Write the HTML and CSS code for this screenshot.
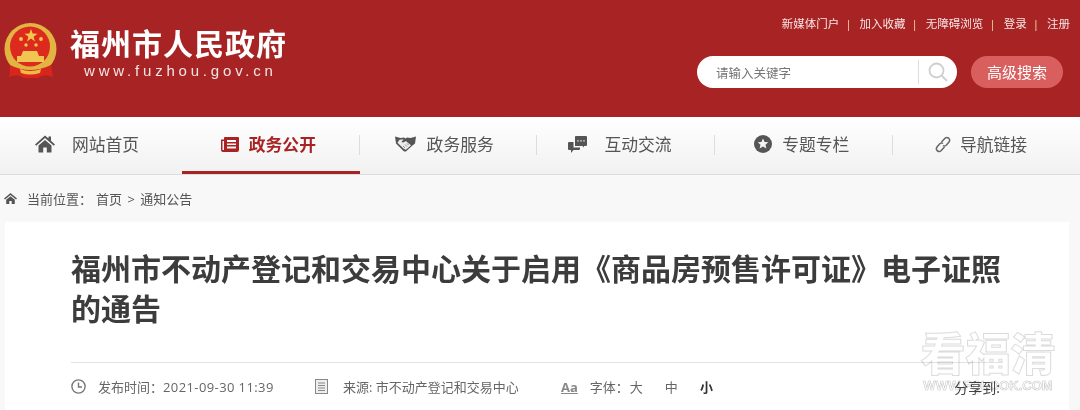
FILE: index.html
```html
<!DOCTYPE html>
<html lang="zh-CN">
<head>
    <meta charset="UTF-8">
    <title>福州市人民政府</title>
    <link rel="stylesheet" href="styles.css">
</head>
<body>
    <header class="header">
        <div class="logo">
            <svg class="crest" width="54" height="56" viewBox="0 0 54 56">
                <path d="M8 40 L5 54 Q14 50 20 55 H34 Q40 50 49 54 L46 40 Z" fill="#d8261c"/>
                <circle cx="26.500" cy="26" r="26" fill="#e2b543"/>
                <circle cx="26" cy="23.500" r="20" fill="#dc2a1e"/>
                <polygon points="27,6 28.600,10.600 33.500,10.700 29.600,13.700 31,18.400 27,15.600 23,18.400 24.400,13.700 20.500,10.700 25.400,10.600" fill="#f3c84a"/>
                <circle cx="17" cy="16" r="1.900" fill="#f3c84a"/>
                <circle cx="37" cy="16" r="1.900" fill="#f3c84a"/>
                <circle cx="22" cy="22" r="1.700" fill="#f3c84a"/>
                <circle cx="32" cy="22" r="1.700" fill="#f3c84a"/>
                <path d="M19 28 H33 L35 33 H40 V39 H13 V33 H17 Z" fill="#f0c552"/>
                <path d="M6 42 Q26 52 47 42 L48 50 Q40 48 34 53 H20 Q14 48 6 50 Z" fill="#d8261c"/>
                <path d="M16 46 Q26 50 37 46 L36 50 Q26 53 17 50 Z" fill="#eebc45"/>
            </svg>
            <div class="logo-text">
                <h1>福州市人民政府</h1>
                <p>www.fuzhou.gov.cn</p>
            </div>
        </div>
        <div class="header-right">
            <div class="toplinks">
                <a href="#">新媒体门户</a><span>|</span>
                <a href="#">加入收藏</a><span>|</span>
                <a href="#">无障碍浏览</a><span>|</span>
                <a href="#">登录</a><span>|</span>
                <a href="#">注册</a>
            </div>
            <div class="search-row">
                <div class="search-box">
                    <span class="placeholder">请输入关键字</span>
                    <span class="search-btn">
                        <svg width="20" height="20" viewBox="0 0 20 20" fill="none" stroke="#cfcfcf" stroke-width="1.800">
                            <circle cx="8.500" cy="8.500" r="7"/>
                            <path d="M13.500 13.500 L19 19"/>
                        </svg>
                    </span>
                </div>
                <a class="adv-btn" href="#">高级搜索</a>
            </div>
        </div>
    </header>

    <nav class="nav">
        <a class="nav-item" href="#">
            <svg class="nav-icon" width="20" height="18" viewBox="0 0 20 18"><path d="M10 0.500 L13.500 3.600 V1.500 H16 V5.800 L20 9.400 L18.800 10.700 L10 3 L1.200 10.700 L0 9.400 Z M3.500 10.600 L10 5 L16.500 10.600 V17.500 H11.800 V12.500 H8.200 V17.500 H3.500 Z" fill="#555"/></svg>
            <span>网站首页</span>
        </a>
        <a class="nav-item active" href="#">
            <svg class="nav-icon" width="18" height="15" viewBox="0 0 18 15"><path d="M0 2.500 H3 V0.800 Q3 0 4 0 H17 Q18 0 18 1 V13 Q18 15 16 15 H2 Q0 15 0 13 Z M1.500 4 V13 H3 V4 Z M6 3 V5 H15 V3 Z M6 6.500 V8 H15 V6.500 Z M6 9.500 V11.500 H15 V9.500 Z" fill="#a82424" fill-rule="evenodd"/></svg>
            <span>政务公开</span>
        </a>
        <a class="nav-item" href="#">
            <svg class="nav-icon" width="21" height="16" viewBox="0 0 21 16"><path d="M0 0.500 L5.500 2 L9 1.500 L10.500 2.500 L12 1.500 L15.500 2 L21 0.500 L20 7.500 L17.500 9.500 L11.500 15 Q10 16 8.500 15 L3.500 10 L1 7.500 Z" fill="#555"/><path d="M4.500 3.800 L8.500 3.200 L6.500 6 Q8.500 7.200 10.800 5 L16 9.200 L11 13.800 L9 13 L4.300 8.600 L2.500 6.800 Z" fill="#ececec"/><path d="M8 10 L10 12 M10 8.500 L12 10.500 M12 7.500 L13.500 9" stroke="#777" stroke-width="0.800"/></svg>
            <span>政务服务</span>
        </a>
        <a class="nav-item" href="#">
            <svg class="nav-icon" width="19" height="17" viewBox="0 0 19 17"><path d="M7 0.500 Q7 0 8 0 H18 Q19 0 19 1 V9 Q19 10 18 10 H16 V11.500 L14.500 10 H7 Z" fill="#555"/><circle cx="10" cy="4.800" r="0.900" fill="#ccc"/><circle cx="13" cy="4.800" r="0.900" fill="#ccc"/><circle cx="16" cy="4.800" r="0.900" fill="#ccc"/><path d="M0 7 Q0 6 1 6 H5.500 V11.500 H12 V13 Q12 14 11 14 H5.500 L3 17 V14 H1 Q0 14 0 13 Z" fill="#555"/></svg>
            <span>互动交流</span>
        </a>
        <a class="nav-item" href="#">
            <svg class="nav-icon" width="18" height="18" viewBox="0 0 18 18"><circle cx="9" cy="9" r="9" fill="#555"/><polygon points="9,3.500 10.600,7 14.300,7.300 11.500,9.800 12.400,13.500 9,11.500 5.600,13.500 6.500,9.800 3.700,7.300 7.400,7" fill="#f4f4f4"/></svg>
            <span>专题专栏</span>
        </a>
        <a class="nav-item" href="#">
            <svg class="nav-icon" width="16" height="17" viewBox="0 0 16 17" fill="none" stroke="#666" stroke-width="1.500"><path d="M6.500 6 L10 2.200 Q11.500 0.800 13.500 2 Q15.500 3.800 14 6 L11 9.500 Q9.500 10.500 8 9.500"/><path d="M9.500 11 L6 14.800 Q4.500 16.200 2.500 15 Q0.500 13.200 2 11 L5 7.500 Q6.500 6.500 8 7.500"/></svg>
            <span>导航链接</span>
        </a>
    </nav>

    <div class="crumb">
        <svg width="13" height="11" viewBox="0 0 13 11"><path d="M6.500 0 L13 5.500 L12 6.500 L6.500 2 L1 6.500 L0 5.500 Z M2.200 6.800 L6.500 3.300 L10.800 6.800 V11 H7.700 V8 H5.300 V11 H2.200 Z" fill="#555"/></svg>
        <span class="crumb-label">当前位置：</span>
        <span class="crumb-path">首页 &gt; 通知公告</span>
    </div>

    <main class="card">
        <h2 class="title">福州市不动产登记和交易中心关于启用《商品房预售许可证》电子证照的通告</h2>
        <div class="meta">
            <div class="meta-item time">
                <svg width="15" height="15" viewBox="0 0 15 15" fill="none" stroke="#777" stroke-width="1.400"><circle cx="7.500" cy="7.500" r="6.600"/><path d="M7.500 3.500 V8 H11"/></svg>
                <span>发布时间：<span class="date">2021-09-30 11:39</span></span>
            </div>
            <div class="meta-item source">
                <svg width="13" height="15" viewBox="0 0 13 15"><rect x="0.500" y="0.500" width="12" height="14" fill="#eee" stroke="#888"/><path d="M3 4 H10 M3 6.500 H10 M3 9 H10 M3 11.500 H10" stroke="#888"/></svg>
                <span>来源: 市不动产登记和交易中心</span>
            </div>
            <div class="meta-item font-size">
                <span class="aa">Aa</span>
                <span class="font-label">字体：</span>
                <span class="size">大</span>
                <span class="size">中</span>
                <span class="size current">小</span>
            </div>
            <div class="share">分享到:</div>
        </div>
    </main>

    <div class="watermark">
        <div class="wm-cn">看福清</div>
        <div class="wm-en">WWW.FQLOOK.COM</div>
    </div>
</body>
</html>
```
FILE: styles.css
```css
* {
    box-sizing: border-box;
}

html, body {
    height: 410px;
    overflow: hidden;
}

body {
    margin: 0;
    background-color: #f8f8f8;
    font-family: "Open Sans", "Noto Sans CJK SC", sans-serif;
    color: #555;
    font-size: 12px;
}

a {
    color: inherit;
    text-decoration: none;
}

.header {
    height: 117px;
    background-color: #a82424;
    display: flex;
    justify-content: space-between;
    padding: 0 10px 0 4px;
}

.logo {
    display: flex;
    align-items: flex-start;
    padding-top: 23px;
}

.logo-text {
    margin-left: 12px;
    color: white;
}

.logo-text h1 {
    margin: 0;
    font-size: 30px;
    line-height: 38px;
    font-weight: bold;
    font-family: "Noto Sans CJK SC", sans-serif;
    letter-spacing: 1px;
}

.logo-text p {
    margin: 0 0 0 14px;
    font-size: 15px;
    line-height: 20px;
    letter-spacing: 3.800px;
    font-family: "Liberation Sans", sans-serif;
    color: #f3e3e3;
}

.header-right {
    display: flex;
    flex-direction: column;
    align-items: flex-end;
}

.toplinks {
    margin-top: 14px;
    height: 18px;
    display: flex;
    align-items: center;
    color: #f6e6e6;
    font-size: 11.500px;
}

.toplinks span {
    margin: 0 8px 0 6px;
    color: #f3d9b0;
}

.search-row {
    margin-top: 24px;
    margin-right: 7px;
    display: flex;
    align-items: center;
}

.search-box {
    width: 260px;
    height: 32px;
    background: white;
    border-radius: 16px;
    display: flex;
    align-items: center;
    justify-content: space-between;
    padding-left: 19px;
}

.placeholder {
    color: #777;
    font-size: 12.500px;
}

.search-btn {
    width: 39px;
    height: 24px;
    border-left: 1px solid #ddd;
    display: flex;
    align-items: center;
    padding-left: 9px;
}

.adv-btn {
    margin-left: 14px;
    width: 92px;
    height: 32px;
    line-height: 32px;
    border-radius: 16px;
    background-color: #d95f5f;
    color: white;
    text-align: center;
    font-size: 15px;
}

.nav {
    height: 58px;
    padding-left: 4px;
    background: linear-gradient(#ffffff, #f1f1f1);
    border-bottom: 1px solid #dedede;
    display: flex;
}

.nav-item {
    width: 177.800px;
    height: 57px;
    padding-bottom: 3px;
    display: flex;
    align-items: center;
    font-size: 16.800px;
    color: #555;
    position: relative;
}

/* icons and labels don't sit centred in the reference menu, so each item has its own offsets */
.nav-item:nth-child(1) { padding-left: 31px; gap: 17px; }
.nav-item:nth-child(2) { padding-left: 39px; gap: 10px; }
.nav-item:nth-child(3) { padding-left: 35px; gap: 11px; }
.nav-item:nth-child(4) { padding-left: 31px; gap: 17px; }
.nav-item:nth-child(5) { padding-left: 39px; gap: 10px; }
.nav-item:nth-child(6) { padding-left: 42px; gap: 9px; }

.nav-item:not(:first-child):not(:last-child)::after {
    content: "";
    position: absolute;
    right: 0;
    top: 18px;
    height: 20px;
    border-right: 1px solid #ddd;
}

.nav-item.active {
    color: #a82424;
    font-weight: bold;
    border-bottom: 3px solid #a82424;
    padding-bottom: 0;
}

.crumb {
    height: 47px;
    display: flex;
    align-items: center;
    padding-left: 4px;
    color: #555;
    font-size: 13px;
}

.crumb-label {
    margin: 0 4px 0 10px;
}

.crumb-path {
    word-spacing: 2px;
}

.card {
    margin: 0 11px 0 5px;
    height: 188px;
    background: white;
    padding: 25px 66px 0;
}

.title {
    margin: 0;
    font-size: 30px;
    line-height: 40px;
    font-weight: bold;
    color: #3c3c3c;
    font-family: "Noto Sans CJK SC", sans-serif;
    text-spacing-trim: space-all;
}

.meta {
    margin-top: 35px;
    border-top: 1px solid #e3e3e3;
    display: flex;
    align-items: center;
    height: 48px;
    font-size: 13px;
    color: #666;
}

.meta-item {
    display: flex;
    align-items: center;
}

.date {
    letter-spacing: 0.400px;
}

.time {
    width: 244px;
    gap: 12px;
}

.source {
    width: 246px;
    gap: 15px;
}

.font-size {
    flex: 1;
}

.aa {
    font-weight: bold;
    text-decoration: underline;
    color: #888;
    margin-right: 12px;
    font-size: 13px;
}

.font-label {
    margin-right: 1px;
}

.size {
    margin-right: 22px;
}

.current {
    font-weight: bold;
    color: #333;
}

.share {
    margin-right: 3px;
    color: #444;
    font-size: 14px;
}

/* multiply lets the rule and the share label show through the logo */
.watermark {
    position: absolute;
    left: 920px;
    top: 326px;
    width: 136px;
    text-align: center;
    mix-blend-mode: multiply;
}

.wm-cn {
    font-size: 45px;
    line-height: 52px;
    font-weight: 900;
    color: white;
    -webkit-text-stroke: 1px #dcdcdc;
    font-family: "Noto Sans CJK SC", sans-serif;
}

.wm-en {
    font-size: 13px;
    line-height: 16px;
    font-weight: bold;
    color: white;
    -webkit-text-stroke: 0.600px #c8c8c8;
    font-family: "Liberation Sans", sans-serif;
    white-space: nowrap;
}
```
